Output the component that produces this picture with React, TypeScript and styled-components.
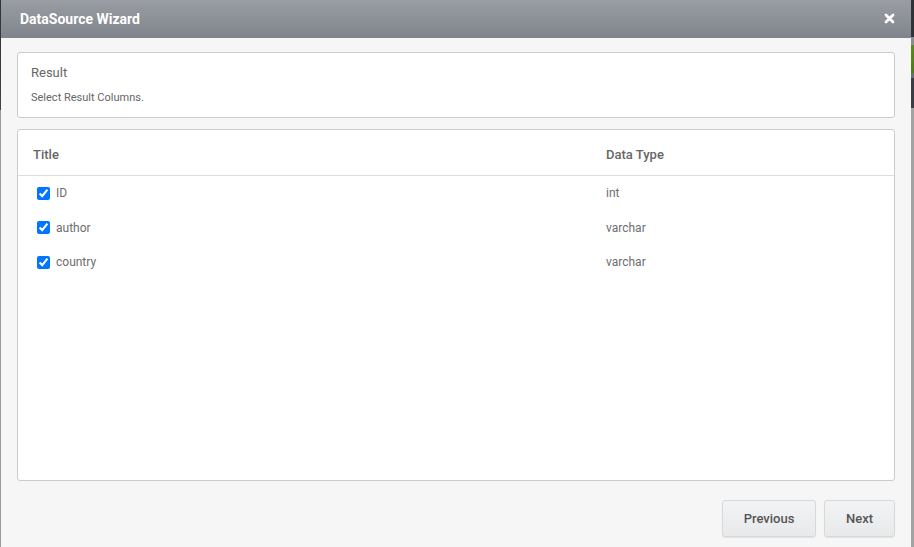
import { styled, createGlobalStyle } from "styled-components";

interface Column {
  id: string;
  title: string;
  dataType: string;
}

const columns: Column[] = [
  { id: "ID", title: "ID", dataType: "int" },
  { id: "author", title: "author", dataType: "varchar" },
  { id: "country", title: "country", dataType: "varchar" },
];

const GlobalStyle = createGlobalStyle`
  html, body {
    margin: 0;
    padding: 0;
    height: 100%;
  }
  body {
    font-family: Roboto, "Liberation Sans", sans-serif;
    background:
      linear-gradient(
        to bottom,
        #2f3338 0px,
        #2f3338 37px,
        #8a8d92 37px,
        #8a8d92 45px,
        #5b8a1f 45px,
        #4d7a17 73px,
        #6a6d72 73px,
        #6a6d72 78px,
        #3a3e44 78px,
        #3a3e44 108px,
        #a3a3a3 108px
      ) right top / 3px 100% no-repeat,
      linear-gradient(to bottom, #2f3338 0px, #3d434a 110px, #9a9a9a 110px) left top / 1px 100% no-repeat,
      #9f9f9f;
    overflow: hidden;
  }
`;

const Dialog = styled.div`
  margin-left: 1px;
  width: 910px;
  height: 547px;
  display: flex;
  flex-direction: column;
  background: #f6f6f6;
`;

const Header = styled.div`
  height: 38px;
  flex: none;
  display: flex;
  align-items: center;
  justify-content: space-between;
  padding: 0 16px 0 19px;
  background: linear-gradient(to bottom, #9a9da3, #7f848c);
`;

const HeaderTitle = styled.h1`
  margin: 0;
  font-size: 14px;
  font-weight: 700;
  color: #ffffff;
`;

const CloseButton = styled.button`
  background: none;
  border: none;
  padding: 0;
  width: 12px;
  height: 12px;
  margin-top: -1px;
  display: flex;
  align-items: center;
  justify-content: center;
  cursor: pointer;
`;

const Body = styled.div`
  flex: 1;
  display: flex;
  flex-direction: column;
  padding: 14px 16px 10px 16px;
  gap: 11px;
  min-height: 0;
`;

const Panel = styled.div<{ $grow?: boolean }>`
  background: #ffffff;
  border: 1px solid #cccccc;
  border-radius: 3px;
  flex: ${(p) => (p.$grow ? "1" : "none")};
  display: flex;
  flex-direction: column;
`;

const StepInfo = styled.div`
  padding: 12px 14px 14px 13px;
  height: 64px;
  box-sizing: border-box;
`;

const StepTitle = styled.div`
  font-size: 13px;
  color: #666666;
  line-height: 16px;
`;

const StepText = styled.div`
  margin-top: 10px;
  font-size: 11px;
  color: #666666;
  line-height: 14px;
`;

const Row = styled.div<{ $head?: boolean }>`
  display: grid;
  grid-template-columns: 573px 1fr;
  align-items: center;
  box-sizing: border-box;
  height: ${(p) => (p.$head ? "46px" : "34.5px")};
  padding: ${(p) => (p.$head ? "4px 15px 0 15px" : "0 15px")};
  border-bottom: ${(p) => (p.$head ? "1px solid #dddddd" : "none")};
  font-size: ${(p) => (p.$head ? "13px" : "12px")};
  font-weight: ${(p) => (p.$head ? 500 : 400)};
  color: ${(p) => (p.$head ? "#666666" : "#6e6e6e")};
`;

const List = styled.div`
  padding-top: 0px;
`;

const Cell = styled.div`
  display: flex;
  align-items: center;
  gap: 6px;
  padding-left: 4px;
`;

const Check = styled.input`
  margin: 0;
  width: 13px;
  height: 13px;
  accent-color: #0075ff;
`;

const Footer = styled.div`
  display: flex;
  justify-content: flex-end;
  gap: 8px;
  padding-top: 8px;
`;

const NavButton = styled.button<{ $width: number }>`
  width: ${(p) => p.$width}px;
  height: 37px;
  font-family: Roboto, "Liberation Sans", sans-serif;
  font-size: 13px;
  font-weight: 500;
  color: #555555;
  background: linear-gradient(to bottom, #f2f3f4, #e8e9ea);
  border: 1px solid #d8d8d8;
  border-radius: 3px;
  box-shadow: 0 1px 1px rgba(0, 0, 0, 0.08);
  cursor: pointer;
`;

export default function App() {
  return (
    <>
      <GlobalStyle />
      <Dialog>
        <Header>
          <HeaderTitle>DataSource Wizard</HeaderTitle>
          <CloseButton aria-label="close">
            <svg width="11" height="11" viewBox="0 0 11 11">
              <path
                d="M2 2 L9 9 M9 2 L2 9"
                stroke="#ffffff"
                strokeWidth="2.8"
                strokeLinecap="round"
              />
            </svg>
          </CloseButton>
        </Header>
        <Body>
          <Panel>
            <StepInfo>
              <StepTitle>Result</StepTitle>
              <StepText>Select Result Columns.</StepText>
            </StepInfo>
          </Panel>
          <Panel $grow>
            <Row $head>
              <div>Title</div>
              <div>Data Type</div>
            </Row>
            <List>
              {columns.map((c) => (
                <Row key={c.id}>
                  <Cell>
                    <Check type="checkbox" checked readOnly />
                    <span>{c.title}</span>
                  </Cell>
                  <div>{c.dataType}</div>
                </Row>
              ))}
            </List>
          </Panel>
          <Footer>
            <NavButton $width={94}>Previous</NavButton>
            <NavButton $width={71}>Next</NavButton>
          </Footer>
        </Body>
      </Dialog>
    </>
  );
}
